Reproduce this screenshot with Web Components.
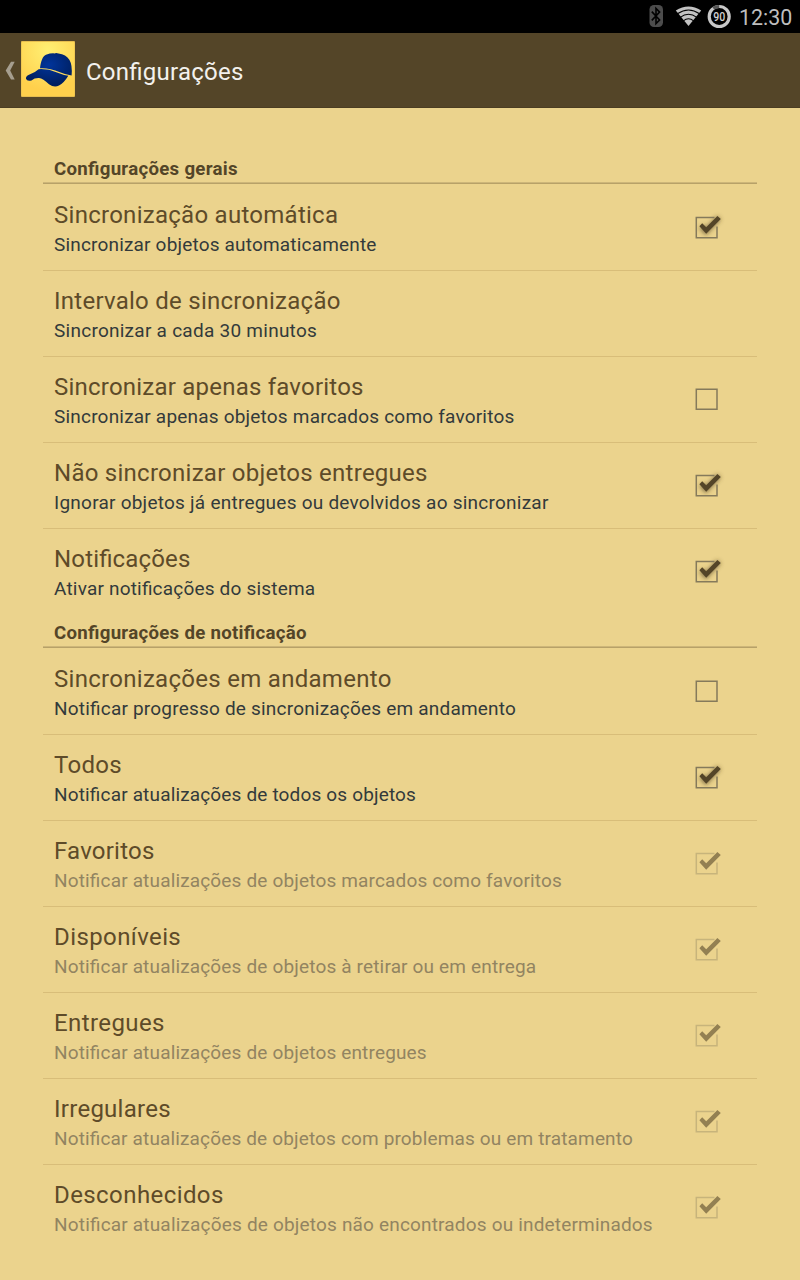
<!DOCTYPE html>
<html lang="pt-BR">
<head>
<meta charset="utf-8">
<title>Configurações</title>
<style>
html,body{margin:0;background:#ebd38d}
body{font-family:Roboto,"Noto Sans",sans-serif;font-feature-settings:"liga" 1;width:800px;height:1280px;overflow:hidden}
main{padding:42px 43px 0}
</style>
</head>
<body>
<status-bar></status-bar>
<action-bar>Configurações</action-bar>
<main>
<pref-group heading="Configurações gerais">
<pref-row heading="Sincronização automática" state="on" style="--h:.27px;--s:.18px">Sincronizar objetos automaticamente</pref-row>
<pref-row heading="Intervalo de sincronização" style="--h:.26px;--s:.26px">Sincronizar a cada 30 minutos</pref-row>
<pref-row heading="Sincronizar apenas favoritos" state="off" style="--h:.22px;--s:.2px">Sincronizar apenas objetos marcados como favoritos</pref-row>
<pref-row heading="Não sincronizar objetos entregues" state="on" style="--h:.26px;--s:.24px">Ignorar objetos já entregues ou devolvidos ao sincronizar</pref-row>
<pref-row heading="Notificações" state="on" style="--h:.16px;--s:.19px">Ativar notificações do sistema</pref-row>
</pref-group>
<pref-group heading="Configurações de notificação">
<pref-row heading="Sincronizações em andamento" state="off" style="--h:.29px;--s:.2px">Notificar progresso de sincronizações em andamento</pref-row>
<pref-row heading="Todos" state="on" style="--h:.3px;--s:.16px">Notificar atualizações de todos os objetos</pref-row>
<pref-row heading="Favoritos" state="on" disabled style="--h:.22px;--s:.16px">Notificar atualizações de objetos marcados como favoritos</pref-row>
<pref-row heading="Disponíveis" state="on" disabled style="--h:.4px;--s:.16px">Notificar atualizações de objetos à retirar ou em entrega</pref-row>
<pref-row heading="Entregues" state="on" disabled style="--h:.4px;--s:.16px">Notificar atualizações de objetos entregues</pref-row>
<pref-row heading="Irregulares" state="on" disabled style="--h:.27px;--s:.15px">Notificar atualizações de objetos com problemas ou em tratamento</pref-row>
<pref-row heading="Desconhecidos" state="on" disabled style="--h:.42px;--s:.18px">Notificar atualizações de objetos não encontrados ou indeterminados</pref-row>
</pref-group>
</main>
<script>
function define(name, html, setup) {
  customElements.define(name, class extends HTMLElement {
    constructor() {
      super();
      this.attachShadow({mode: 'open'}).innerHTML = html;
    }
    connectedCallback() { if (setup) setup(this, this.shadowRoot); }
  });
}

define('status-bar', `
<style>
:host{display:flex;height:33px;background:#000;justify-content:flex-end;align-items:center;box-sizing:border-box;padding-right:8px;color:#bebebe}
svg{display:block}
.time{font-size:21.4px;line-height:33px;margin-left:7px;padding-top:2px;width:53px;white-space:nowrap}
.wifi{margin:0 5px 0 11px}
</style>
<svg width="15" height="33" viewBox="0 0 15 33"><rect x=".5" y="5" width="13.5" height="22" rx="4.5" fill="#4c4c4c"/><path d="M2.8 11.6 10.6 20 7 23.5V8.5l3.6 3.6L2.8 20.4" fill="none" stroke="#000" stroke-width="1.6"/></svg>
<svg class="wifi" width="27" height="33" viewBox="0 0 27 33"><path d="M.8 10.6Q13.5 2.6 26.2 10.6L13.5 26Z" fill="#c3c3c3"/><g fill="none" stroke="#000" stroke-width="1.1"><path d="M2.4 13.8Q13.5 6.2 24.6 13.8M5.2 17.4Q13.5 11 21.8 17.4M8.4 20.8Q13.5 16.6 18.6 20.8"/></g></svg>
<svg width="25" height="33" viewBox="0 0 25 33"><circle cx="12.2" cy="16.5" r="10" fill="none" stroke="#c8c8c8" stroke-width="3.2"/><path d="M6.3 8.4A10 10 0 0 1 12.2 6.5" fill="none" stroke="#555" stroke-width="3.2"/><text x="12.2" y="21" text-anchor="middle" font-size="13" font-weight="500" textLength="12" lengthAdjust="spacingAndGlyphs" fill="#d0d0d0">90</text></svg>
<span class="time">12:30</span>`);

define('action-bar', `
<style>
:host{display:flex;height:75px;background:#544528;align-items:center;color:#f3f1ed;font-size:24px;box-sizing:border-box;padding-left:5px;box-shadow:inset 0 -1px #4b3d22}
.back{margin-right:6px;margin-top:1px}
svg{display:block;flex:none}
.title{margin-left:11px;padding-top:2px;white-space:nowrap;letter-spacing:.24px}
</style>
<svg class="back" width="10" height="20" viewBox="0 0 10 20"><path d="M6 .8H9.7L5.2 9.6l4.5 9H6L.7 9.6Z" fill="#a69e8f"/></svg>
<svg width="54" height="56" viewBox="0 0 54 56" style="margin-top:-3px"><defs><radialGradient id="y" cx=".5" cy=".15" r=".75"><stop offset="0" stop-color="#ffef73"/><stop offset="1" stop-color="#ffd04c"/></radialGradient><radialGradient id="b" cx=".5" cy=".35" r=".6"><stop offset="0" stop-color="#00349b"/><stop offset="1" stop-color="#001f60"/></radialGradient></defs>
<rect width="54" height="56" rx="1" fill="#e6bd4f"/><rect x=".6" y="1" width="52.8" height="54" rx="1" fill="url(#y)"/>
<path d="M19 27.2C20 20 21.5 15.5 25 13.8Q30 12 33.5 12.4Q35 11.4 37.5 12.4Q45 13.2 48.5 19Q51.5 24 50.6 34.4Q45 33.8 39 31.2Q28 26.6 19 27.2ZM17.6 28.2Q27 27.6 36 31.5Q42 34 47.3 34.8Q43 42 38 44.6Q33 47 28 43.2Q22 37.5 18 37Q13.5 36.8 10.5 39.4Q6 40.6 5 37.8Q4.6 35.4 8 33.8Q14 31.6 17.6 28.2Z" fill="url(#b)"/></svg>
<span class="title"><slot></slot></span>`);

define('pref-group', `
<style>
:host{display:block}
h2{margin:0;height:35px;box-sizing:border-box;padding:7px 11px 0;font-size:18.67px;line-height:24px;font-weight:700;letter-spacing:.28px;color:#544528;white-space:nowrap;background:linear-gradient(#cdb679,#cdb679) 0 32px/100% 1px no-repeat,linear-gradient(#b7a168,#b7a168) 0 33px/100% 1px no-repeat}
::slotted(pref-row:not(:last-child)){border-bottom:1px solid #d8bd79}
</style><h2></h2><slot></slot>`, (el, root) => {
  root.querySelector('h2').textContent = el.getAttribute('heading');
});

define('pref-row', `
<style>
:host{display:flex;height:85px;align-items:center;padding:0 31px 0 11px}
.text{flex:1;min-width:0;white-space:nowrap;padding-top:3px}
.head{font-size:24px;line-height:30px;color:#5e4b29;letter-spacing:var(--h)}
.sum{font-size:19px;line-height:29px;color:#333a3b;letter-spacing:var(--s)}
:host([disabled]) .sum{color:#928461}
svg{display:none;flex:none;margin-top:-2px}
:host([state]) svg{display:block}
.tick,.shade,.closed{display:none}
:host([state=on]) .tick,:host([state=on]) .shade{display:block}
:host([state=on]) .open{display:none}
:host([state=on]) .closed{display:block}
:host([disabled]) svg{opacity:.58}
:host([disabled]) .box{opacity:.6}
:host([disabled]) .shade{display:none}
</style>
<div class="text"><div class="head"></div><div class="sum"><slot></slot></div></div>
<svg width="32" height="32" viewBox="0 0 32 32"><defs><filter id="f" x="-40%" y="-40%" width="180%" height="180%"><feGaussianBlur stdDeviation="2"/></filter></defs>
<path class="shade" d="M7.2 15.5 12 20.5 25 6.5" fill="none" stroke="#544528" stroke-opacity=".65" stroke-width="5.5" filter="url(#f)"/>
<g class="box" fill="none" stroke="#857a5b" stroke-width="1.5"><path class="open" d="M2.3 6.3H23V26.3H2.3Z"/><path class="closed" d="M20.5 6.5H2.3V26.8H23V15.5"/></g>
<path class="tick" d="M5.4 15.2 8.2 12.2 12.2 16.2 23.4 5 26.8 8 12.2 22.7Z" fill="#544528"/></svg>`, (el, root) => {
  root.querySelector('.head').textContent = el.getAttribute('heading');
});
</script>
</body>
</html>
